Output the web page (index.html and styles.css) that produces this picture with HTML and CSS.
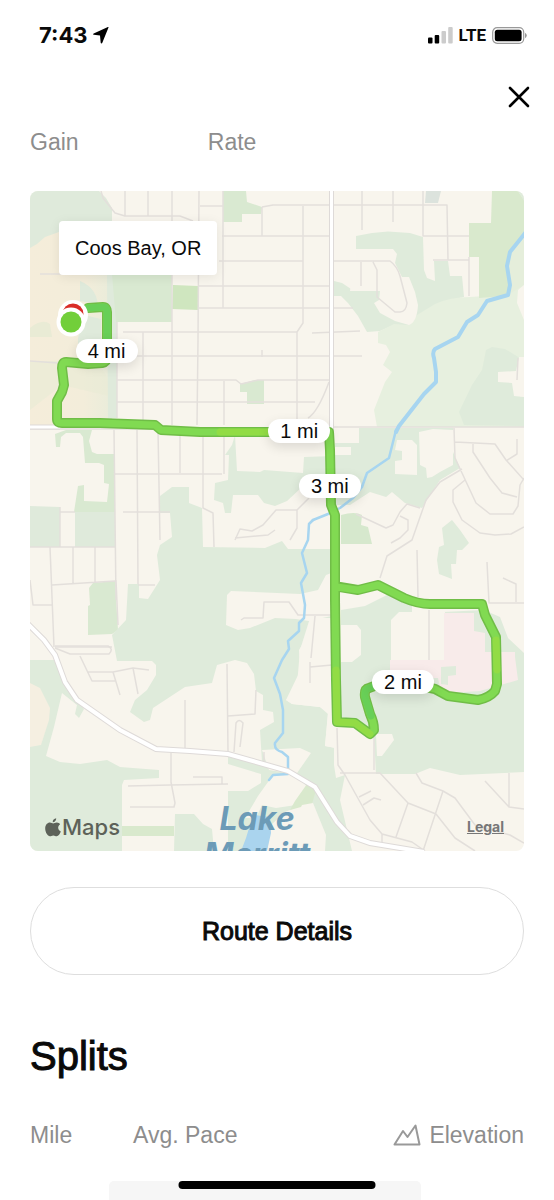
FILE: index.html
```html
<!DOCTYPE html>
<html lang="en">
<head>
<meta charset="utf-8">
<meta name="viewport" content="width=device-width, initial-scale=1">
<title>Run Details</title>
<link rel="stylesheet" href="styles.css">
</head>
<body>
<div class="screen">
  <header class="status">
    <div class="status-side">
      <span class="time">7:43</span>
      <svg class="locate" viewBox="0 0 16 17" aria-hidden="true"><path d="M15.4.7c.3-.4 0-.8-.5-.6L.7 6.400C0 6.800 0 7.700.8 7.800L7 8.400l.7 7.400c.1.900 1.200.900 1.500.2z"/></svg>
    </div>
    <div class="status-side">
      <svg class="signal" viewBox="0 0 25 17" aria-hidden="true"><rect x="0" y="10.500" width="4.500" height="6" rx="1"/><rect x="6.700" y="8" width="4.500" height="8.500" rx="1"/><g fill="#ccc"><rect x="13.500" y="4" width="4.500" height="12.500" rx="1"/><rect x="20.200" y="0" width="4.500" height="16.500" rx="1"/></g></svg>
      <span class="network">LTE</span>
      <svg class="battery" viewBox="0 0 35 17" aria-hidden="true"><rect x=".7" y=".7" width="31" height="15.600" rx="4.500" fill="none" stroke="#999" stroke-width="1.200"/><rect x="2.800" y="2.800" width="26.800" height="11.400" rx="2.500"/><path d="M33 5.800q1.800.9 1.800 2.700T33 11.200z" fill="#999"/></svg>
    </div>
  </header>

  <div class="toolbar">
    <button class="close" type="button" aria-label="Close"><svg viewBox="0 0 22 22" aria-hidden="true"><path d="M2 2l18 18M20 2L2 20"/></svg></button>
  </div>

  <main class="content">
    <div class="stats"><span>Gain</span><span>Rate</span></div>

    <section class="map" aria-label="Route map">
      <svg class="map-art" viewBox="30 191 494 660" aria-hidden="true">
        <defs>
          <linearGradient id="sand" x1="0" x2="1"><stop offset="0" stop-color="#f5edda"/><stop offset=".65" stop-color="#f3edda"/><stop offset="1" stop-color="#e9ecda"/></linearGradient>
        </defs>
        <rect x="30" y="191" width="494" height="660" fill="#f8f5ed"/>
        <path fill="url(#sand)" d="M30 236L59 230 112 222V426H30z"/>
        <g fill="#e9ebd5"><path d="M30 328q12-10 20-4l2 13H30z"/><path d="M36 361h62l11 20v15L62 385 30 410v-48z" opacity=".7"/></g>
        <path fill="#dfeadb" d="M30 191H99L106 198 112 208V232H59L45 237 37 244 30 248zM107 274h10v144h-9zM80 281q11 4 16 15l2 8-18-3zM84 315l17 4v39H78V338z"/>
        <path fill="#d9e9d1" d="M112 274h60v48h-56z"/>
        <path fill="#cfe6bf" d="M173 285l25 1v24l-26-1z"/>
        <path fill="#d9e9d1" d="M223 191h23l1 11 15 5-1 7h-19v8h-19zM240 384l15-4h9v24h-17v-12h-7z"/>
        <path fill="#dce3dd" d="M426 191h15l-3 12h-13z"/>

        <!-- north-east parks and meadow -->
        <path fill="#dfebdb" d="M356 236L372 233 388 231.500 410 233 423 237 424 270 427 278 435 281 434 261 448 261 450 276 462 276 464 297 450 300 417 318 408 325H394L380 331 367 332 358 316 348 303 341 296H334V281L342 283 354 291H382V249H356z"/>
        <path fill="#e7f0df" d="M524 265V427H377L374 410 385 382 392 372 383 365 390 352 386 345 378 343V332L394 324 408 325 417 315 435 304Q450 297 470 297L500 295z"/>
        <path fill="#d9e9cd" d="M492 191H518L524 200V234L510 252 507 266 510 290 504 296 479 298V257H469V223H491z"/>
        <path fill="#dfebdb" d="M518 191h6v10zM486 350L492 347 505 349 520 358V397L524 397V426L464 425 459 412 472 385 482 370z"/>
        <path fill="#e5eedb" d="M524 234L510 252 507 266 511 293 524 285z"/>
        <g fill="#f8f5ed">
          <path d="M356 249H393L397 254 395 263 402 277H409L415 292 418 305Q417 322 409 325L395 321 380 313 374 303 379 300 380 291H350z"/>
          <path d="M524 285L518 290 517 303 524 320zM519 357H524V397L514 396 512 383 498 382V372L516 371z"/>
        </g>

        <!-- western parks -->
        <g fill="#d9e9d1"><path d="M56 447L55 434 66 430H92L89 441 92 452 97 454H115V512H74L78 486 84 485V501L107 502 109 484 104 483V465L99 463H85L83 437 80 433H66L61 437 60 447z"/><path d="M93 583L115 581 118 630 112 634 88 635V606L90 605 89 588z"/></g>
        <path fill="#dfeadb" d="M30 506L60 507V547H30zM75 512H115V547H75z"/>
        <path fill="#dfebdb" d="M30 660H54L66 685 84 709 79 718 75 714 77 705 62 693 54 727 46 756 60 762 80 764 107 760 120 767 159 770V778L124 780 122 785V851H30z"/>
        <path fill="#f5efe1" d="M30 683L40 688 50 708 49 720 41 745 30 747z"/>

        <!-- central woods -->
        <path fill="#dfebdb" d="M160 496L172 487H189V503L202 508 203 547 265 548 282 541 288 549H334V765L336 778 345 775 340 800 352 851H325L312 803 300 806 285 812 271 825 267 851H228V791H248L261 783V774L228 764V754L262 762 260 730 274 722 273 712 263 710V695L256 691 254 674 247 663 235 660 217 665 212 683 185 687 153 708 150 720 144 722 130 712 135 700 147 690 156 675V665L152 661H117L112 635 126 620 128 584H139V598L148 599 160 580 157 555 160 545 172 537 170 513H160z"/>
        <g fill="#f8f5ed">
          <path d="M231 591L300 594 318 590 326 575 334 572V618H311L308 635 299 650 300 671 286 700 292 704 320 707 328 714 325 746 336 748V615L309 621 296 619 275 618 250 628 238 630 226 625 227 595z"/>
          <path d="M310 618H335V748L325 746 328 712 320 707 292 704 286 700 297 685 300 650z"/>
          <path d="M262 750L300 748 311 753 295 776 288 773 269 770z"/>
          <path d="M273 775L297 774 307 787 296 805 276 808 262 805 256 818H245L258 796z"/>
        </g>
        <path fill="#d9e9cd" d="M122 826H174V836H122zM307 784L316 790 312 804 290 810 295 801z"/>
        <path fill="#dfebdb" d="M175 814L194 814 203 824 212 829 214 851H174z"/>
        <path fill="#f8f5ed" d="M302 805L313 803 326 835 325 851H285L288 835z"/>
        <path fill="#dfebdb" d="M235 435L237 471 260 472 264 470 303 473 304 457 334 456V486L311 483 301 488 287 501 275 506 264 503 258 495H233L231 513H225L223 503 214 500 215 483 228 480 229 455H225L232 445z"/>

        <!-- eastern woods -->
        <path fill="#dfebdb" d="M335 455H351V447H335V443H359V428H453V452L460 468 440 480 427 500 422 508 405 503 392 492 386 497 370 492 350 505H335z"/>
        <g fill="#f8f5ed"><path d="M397 440L412 440 417 445V475L395 474V461L402 460V451L395 450zM419 432L433 429 453 430V465L440 472 432 477 427 478 426 468 420 465z"/></g>
        <path fill="#d6e8cd" d="M341 515Q355 511 362 515L361 525 368 527 372 544H341z"/>
        <path fill="#dfebdb" d="M442 528L452 520 460 530 469 543 462 550H457L456 564H451L452 579 439 574 437 560 439 547 444 545z"/>
        <path fill="#dfebdb" d="M341 610L365 606 387 595 412 604V612H443L484 610 500 617 508 638 524 653V772L460 775 430 768 415 774H376L374 737 341 722z"/>
        <path fill="#f8f5ed" d="M341 625H357L361 630V655L352 662H341zM391 620L399 612H445V660H391zM376 734H392L394 740 382 756H377z"/>
        <path fill="#f8ebea" d="M444 613H474V631L485 633V652H515V657L518 680 480 691 450 693 440 688 438 678H390V660H444z"/>
        <path fill="#dfebdb" d="M441 667L456 666V675L448 676V685L441 684z"/>
        <path fill="#aad4ee" d="M253 815L270 817 271 833 267 851H241L246 838z"/>

        <!-- streets -->
        <g class="street">
          <path d="M101 191L103 198 115 213 125 216H180L193 221M125 191V216M148 191V216M172 191V425M199 191L198 340 197 425M223 191V308M262 207V236M303 206V323L297 332V425M262 350V357M143 332V420M224 381V425M117 322V418"/>
          <path d="M200 206H223M262 207L273 205H447L448 260M222 236H329M219 261H303M199 286H329M199 308H353M123 332H297M116 356H362M117 380H236L241 384 258 380H329M117 402H315M329 382Q318 412 308 418M312 333L360 331M40 274H100M30 361L58 363"/>
          <path d="M362 191V230M393 191V222M423 191V236H469M469 257V296M433 260H469M334 261H390Q397 266 400 276L407 303Q406 312 400 312H395L377 297V270L373 262M361 262V286M334 427H524M518 358L517 380"/>
          <path d="M30 429H330M114 430L116 600M137 430L138 584M158 430L160 540M180 430V473M115 474H222M123 512H170M60 512H75M30 547H116M50 547L54 647M60 507V547M73 547V583M95 547V582M52 585L115 581M30 580L33 605H52M55 647H112M138 585H155M203 430V508L213 513 214 547M224 436V474M116 580L118 625"/>
          <path d="M235 540L240 529 252 531 263 525 276 510H297L309 498M297 510V528L290 540M235 538L268 535 275 530M241 620L244 618H263L264 602H289L298 615H332M315 616L311 658M310 662V683M310 667L332 665"/>
          <path d="M454 428L455 458 476 503 490 514H513L518 506 520 485 524 478M455 442L495 444 506 460 524 480M473 444V452L490 478 502 493 517 497M517 439V454L506 461M465 480L453 490V502L462 520 480 533 495 535 511 534 524 527M462 469L440 482 426 500 412 540 387 556 380 578M356 514L386 528 393 525 400 512 407 504 420 508M400 516L408 520V530L400 538 391 543M417 550L418 597M487 562L489 603H524M503 578L516 584V602M429 610V660"/>
          <path d="M55 646H108Q114 649 109 654H70L55 648M80 656L92 681H115M87 672H113L133 668 149 670M113 672L120 695M133 668L138 694M185 700V748M171 753V782L175 803 174 807H130M128 786L170 785 228 784M193 777H222V784M227 664L228 752M228 716L255 714 256 690M234 752L236 723Q239 718 243 723L240 747M264 752V762"/>
          <path d="M337 728L338 765 345 775 370 820 382 834V843M340 773H380L408 803 436 814 455 838 475 851M408 803L396 837M416 773L422 783 443 791 455 798 475 825 510 835 524 843M443 791L423 851M485 781L509 807 524 809M509 773V807M359 797L371 791M363 805L374 798 381 800M382 834L412 842 425 851M374 735V770"/>
        </g>

        <path class="river" d="M313 520L309 524 308 540 302 553 307 573 301 583 305 605 304 618 299 623V631L288 641 289 649 282 660 274 678 280 694 283 710V733L275 743Q274 750 282 752L288 757V774L273 775 269 780"/>
        <path class="river" d="M396 430L389 458 367 473 362 487 353 498 340 508 328 514 313 520"/>
        <path class="river river-wide" d="M526 232L510 252 507 266 510 285 508 295 487 301 478 315 467 322 458 337 435 349Q432 352 434 358L436 372V382L424 394 399 426 396 432"/>

        <path class="road-edge" d="M331.500 188V431M26 427H60"/>
        <path class="road" d="M331.500 188V431M26 427H60"/>
        <path class="road-edge road-edge-main" d="M28 624L44 640 55 655 65 682 77 700 120 730 156 749 190 751 228 754 288 771 315 787 337 822 350 836 370 843 424 852"/>
        <path class="road road-main" d="M28 624L44 640 55 655 65 682 77 700 120 730 156 749 190 751 228 754 288 771 315 787 337 822 350 836 370 843 424 852"/>

        <path class="route-edge" d="M88 308L103 307Q107 307 107 312V357Q107 362 102 363L88 364 66 362Q62 362 62 368L64 385 62 392 57 401V419Q57 423 62 423L100 423 155 425 161 430 200 432H329L330 450 331 505 335 515 335 600 336 680 337 722 355 723 370 734 374 730Q374 722 370 714L365 697Q364 689 369 688L385 682H403L435 689 448 696 478 700Q489 698 495 691L497 684 496 637 485 615 482 604H430Q418 604 404 598L378 585 358 590 340 587"/>
        <path class="route" d="M88 308L103 307Q107 307 107 312V357Q107 362 102 363L88 364 66 362Q62 362 62 368L64 385 62 392 57 401V419Q57 423 62 423L100 423 155 425 161 430 200 432H329L330 450 331 505 335 515 335 600 336 680 337 722 355 723 370 734 374 730Q374 722 370 714L365 697Q364 689 369 688L385 682H403L435 689 448 696 478 700Q489 698 495 691L497 684 496 637 485 615 482 604H430Q418 604 404 598L378 585 358 590 337 587"/>
        <path class="route route-cool" d="M88 308L103 307Q107 307 107 312V345M371 716L365 697Q364 689 369 688L380 684"/>
        <path class="route route-warm" d="M220 432H270M336 670L337 722 355 723 370 734M497 670L496 640"/>

        <circle cx="73" cy="315" r="15" fill="#fff"/><circle cx="73" cy="314" r="10.500" fill="#d92c27"/>
        <circle cx="71" cy="322" r="14.500" fill="#fff"/><circle cx="71" cy="322" r="10.500" fill="#72cf3a"/>

        <g class="place"><text x="257" y="830">Lake</text><text x="257" y="866">Merritt</text></g>
      </svg>

      <div class="location">Coos Bay, OR</div>
      <span class="mile mile-1">1 mi</span>
      <span class="mile mile-2">2 mi</span>
      <span class="mile mile-3">3 mi</span>
      <span class="mile mile-4">4 mi</span>
      <div class="attribution">
        <span class="brand"><svg viewBox="0 0 16 19" aria-hidden="true"><path d="M11.200.2c.2 1.900-1.500 4-3.500 4C7.500 2.200 9.200.4 11.200.2zM8.200 5.400c.8 0 1.900-1 3.700-1 1.300 0 2.500.7 3.300 1.800-3 1.900-2.500 5.900.6 7.200-.8 2.200-2.400 4.800-4.100 4.800-1.300 0-1.800-.8-3.400-.8s-2.100.8-3.400.8C2.700 18.200.2 14.200.2 10.400c0-3.700 2.300-5.900 4.700-5.900 1.500 0 2.500.9 3.300.9z"/></svg>Maps</span>
        <a class="legal" href="#legal">Legal</a>
      </div>
    </section>

    <button class="details" type="button">Route Details</button>

    <h1 class="heading">Splits</h1>
    <table class="splits">
      <thead><tr>
        <th class="col-mile" scope="col">Mile</th>
        <th scope="col">Avg. Pace</th>
        <th class="col-elevation" scope="col"><span class="elevation"><svg viewBox="0 0 28 22" aria-hidden="true"><path d="M1.500 20.500L10 7l4.500 6L22.500 1.500 26.500 20.500z"/></svg>Elevation</span></th>
      </tr></thead>
    </table>
    <div class="pace-bar"></div>
  </main>
  <div class="home-indicator"></div>
</div>
</body>
</html>
```
FILE: styles.css
```css
* { box-sizing: border-box; }

body {
  margin: 0;
  background: #fff;
  color: #0a0a0a;
  font-family: "Liberation Sans", Arial, sans-serif;
}

button { font: inherit; color: inherit; cursor: pointer; }

.screen {
  position: relative;
  display: flex;
  flex-direction: column;
  height: 100vh;
  overflow: hidden;
}

.status {
  flex: none;
  display: flex;
  align-items: center;
  justify-content: space-between;
  padding: 20px 27px 20px 39px;
  line-height: 30px;
  font-family: Inter, sans-serif;
}

.status-side { display: flex; align-items: center; gap: 6px; }
.time { font-size: 22px; font-weight: 700; }
.network { font-family: Roboto, sans-serif; font-size: 17px; font-weight: 700; }
.locate { width: 16px; height: 17px; }
.signal { width: 25px; height: 17px; }
.battery { width: 35px; height: 17px; }

.toolbar {
  flex: none;
  display: flex;
  justify-content: flex-end;
  padding: 12px 20px 0;
}

.close {
  width: 30px;
  height: 30px;
  padding: 4px;
  border: 0;
  background: none;
}

.close svg {
  display: block;
  fill: none;
  stroke: #000;
  stroke-width: 2.600;
  stroke-linecap: round;
}

.content {
  flex: 1 1 auto;
  display: flex;
  flex-direction: column;
  padding: 0 30px;
}

.stats {
  display: grid;
  grid-template-columns: 36% 1fr;
  padding: 16px 0 35px;
  color: #8d8d8d;
  font-size: 23px;
  line-height: 28px;
}

.map {
  position: relative;
  flex: none;
  overflow: hidden;
  border-radius: 8px;
}

.map-art { display: block; width: 100%; height: auto; }

.street { fill: none; stroke: #e3dfdb; stroke-width: 1.500; stroke-linejoin: round; }
.river { fill: none; stroke: #a7d5f0; stroke-width: 2.500; stroke-linejoin: round; stroke-linecap: round; }
.river-wide { stroke-width: 4; }
.road-edge { fill: none; stroke: #dedad8; stroke-width: 5; }
.road { fill: none; stroke: #fff; stroke-width: 3; }
.road-edge-main { stroke-width: 6; }
.road-main { stroke-width: 4; }
.route-edge, .route { fill: none; stroke-linejoin: round; stroke-linecap: round; }
.route-edge { stroke: #70bd47; stroke-width: 10; }
.route { stroke: #81da52; stroke-width: 7; }
.route-cool { stroke: #68cf57; }
.route-warm { stroke: #92dc45; }

.place {
  fill: #6c9bb7;
  font-family: Inter, sans-serif;
  font-size: 32px;
  font-style: italic;
  font-weight: 700;
  text-anchor: middle;
}

.location {
  position: absolute;
  top: 30px;
  left: 29px;
  padding: 15px 16px;
  border-radius: 4px;
  background: #fff;
  box-shadow: 0 2px 12px rgba(0, 0, 0, .08);
  font-size: 20px;
  line-height: 24px;
}

.mile {
  position: absolute;
  width: 62px;
  border-radius: 12px;
  background: #fff;
  box-shadow: 0 4px 12px rgba(0, 0, 0, .12);
  font-size: 20px;
  line-height: 24px;
  text-align: center;
  transform: translate(-50%, -50%);
}

.mile-1 { left: 54.500%; top: 36.400%; }
.mile-2 { left: 75.500%; top: 74.400%; }
.mile-3 { left: 60.700%; top: 44.700%; }
.mile-4 { left: 15.500%; top: 24.200%; }

.attribution {
  position: absolute;
  right: 20px;
  bottom: 10px;
  left: 15px;
  display: flex;
  align-items: center;
  justify-content: space-between;
  font-family: Inter, sans-serif;
}

.brand {
  display: flex;
  align-items: center;
  gap: 1px;
  color: #5d6259;
  fill: #5d6259;
  font-size: 22px;
  font-weight: 500;
  line-height: 28px;
}

.brand svg { width: 16px; height: 19px; }

.legal {
  color: #777;
  font-size: 14px;
  font-weight: 700;
  line-height: 20px;
}

.details {
  flex: none;
  height: 88px;
  margin-top: 36px;
  border: 1px solid #dedede;
  border-radius: 44px;
  background: #fff;
  font-size: 25px;
  -webkit-text-stroke: 1px #0a0a0a;
}

.heading {
  margin: 57px 0 0;
  font-size: 40px;
  font-weight: 400;
  line-height: 48px;
  -webkit-text-stroke: 1px #0a0a0a;
}

.splits {
  width: 100%;
  margin-top: 41px;
  border-collapse: collapse;
  color: #8d8d8d;
  font-size: 23px;
  line-height: 28px;
}

.splits th { padding: 0; font-weight: 400; text-align: left; }
.splits .col-mile { width: 103px; }
.elevation { display: flex; align-items: center; justify-content: flex-end; gap: 8px; }
.elevation svg { width: 28px; height: 22px; fill: none; stroke: #999; stroke-width: 2; stroke-linejoin: round; }

.pace-bar {
  flex: 1 0 19px;
  margin: 32px 103px 0 79px;
  border-radius: 5px 5px 0 0;
  background: #f6f6f6;
}

.home-indicator {
  position: absolute;
  bottom: 11px;
  left: 50%;
  width: 197px;
  height: 8px;
  border-radius: 4px;
  background: #000;
  transform: translateX(-50%);
}
```
